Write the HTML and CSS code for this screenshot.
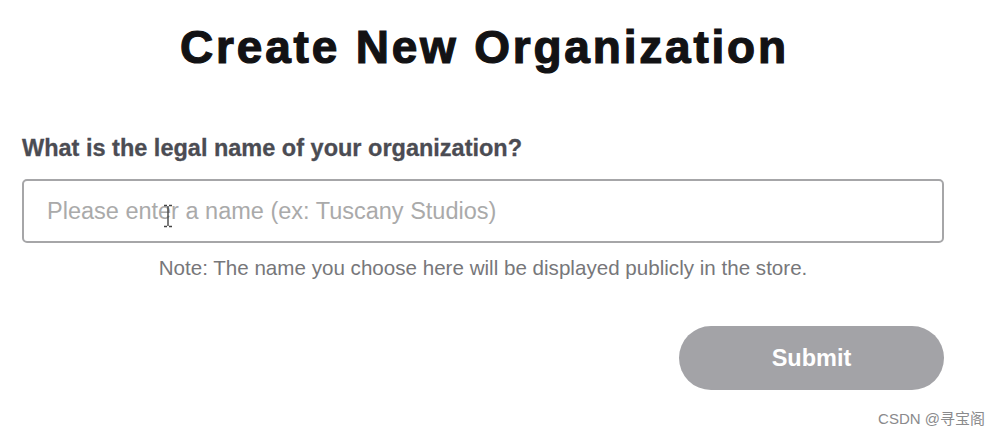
FILE: index.html
```html
<!DOCTYPE html>
<html lang="en">
<head>
<meta charset="utf-8">
<title>Create New Organization</title>
<link rel="stylesheet" href="styles.css">
</head>
<body>
<main class="page">
  <h1 class="title">Create New Organization</h1>
  <form class="form">
    <label class="label" for="org">What is the legal name of your organization?</label>
    <div class="field">
      <input id="org" class="input" type="text" placeholder="Please enter a name (ex: Tuscany Studios)">
      <svg class="cursor" width="10" height="24" viewBox="0 0 10 24"><path d="M1 1.5h3M6 1.5h3M5 2v20M1 22.5h3M6 22.5h3" stroke="#444" stroke-width="1.4" fill="none"/></svg>
    </div>
    <p class="note">Note: The name you choose here will be displayed publicly in the store.</p>
    <div class="actions">
      <button type="button" class="submit">Submit</button>
    </div>
  </form>
  <div class="watermark">CSDN @寻宝阁</div>
</main>
</body>
</html>
```
FILE: styles.css
```css
html, body {
  margin: 0;
  padding: 0;
  background: #ffffff;
}
body {
  font-family: "Liberation Sans", Arial, sans-serif;
  width: 1000px;
  height: 432px;
  overflow: hidden;
}
.page {
  padding: 21px 56px 0 22px;
  width: 922px;
  position: relative;
  height: 411px;
}
.title {
  margin: 0;
  padding-left: 3px;
  text-align: center;
  font-size: 46px;
  font-weight: 700;
  line-height: 53px;
  letter-spacing: 2.8px;
  -webkit-text-stroke: 1.2px #121214;
  color: #121214;
}
.form {
  margin-top: 61px;
  display: flex;
  flex-direction: column;
}
.label {
  font-size: 23.5px;
  font-weight: 700;
  line-height: 27px;
  color: #4b4c53;
  -webkit-text-stroke: 0.3px #4b4c53;
}
.field {
  position: relative;
  margin-top: 17px;
}
.input {
  box-sizing: border-box;
  width: 922px;
  height: 64px;
  border: 2px solid #a6a6a8;
  border-radius: 5px;
  padding: 0 0 0 23px;
  font-family: "Liberation Sans", Arial, sans-serif;
  font-size: 23.5px;
  color: #333;
  outline: none;
  background: #fff;
}
.input::placeholder {
  color: #aaaaaa;
}
.cursor {
  position: absolute;
  left: 141px;
  top: 25px;
}
.note {
  margin: 13px 0 0;
  text-align: center;
  font-size: 20.6px;
  line-height: 23px;
  color: #77777a;
}
.actions {
  display: flex;
  justify-content: flex-end;
  margin-top: 47px;
}
.submit {
  width: 265px;
  height: 64px;
  border: none;
  border-radius: 32px;
  background: #a3a3a7;
  color: #ffffff;
  font-family: "Liberation Sans", Arial, sans-serif;
  font-size: 23.5px;
  font-weight: 700;
}
.watermark {
  position: absolute;
  right: 15px;
  top: 407px;
  font-family: "Liberation Sans", "Noto Sans CJK SC", sans-serif;
  font-size: 15px;
  color: #8a8a8c;
}
```
